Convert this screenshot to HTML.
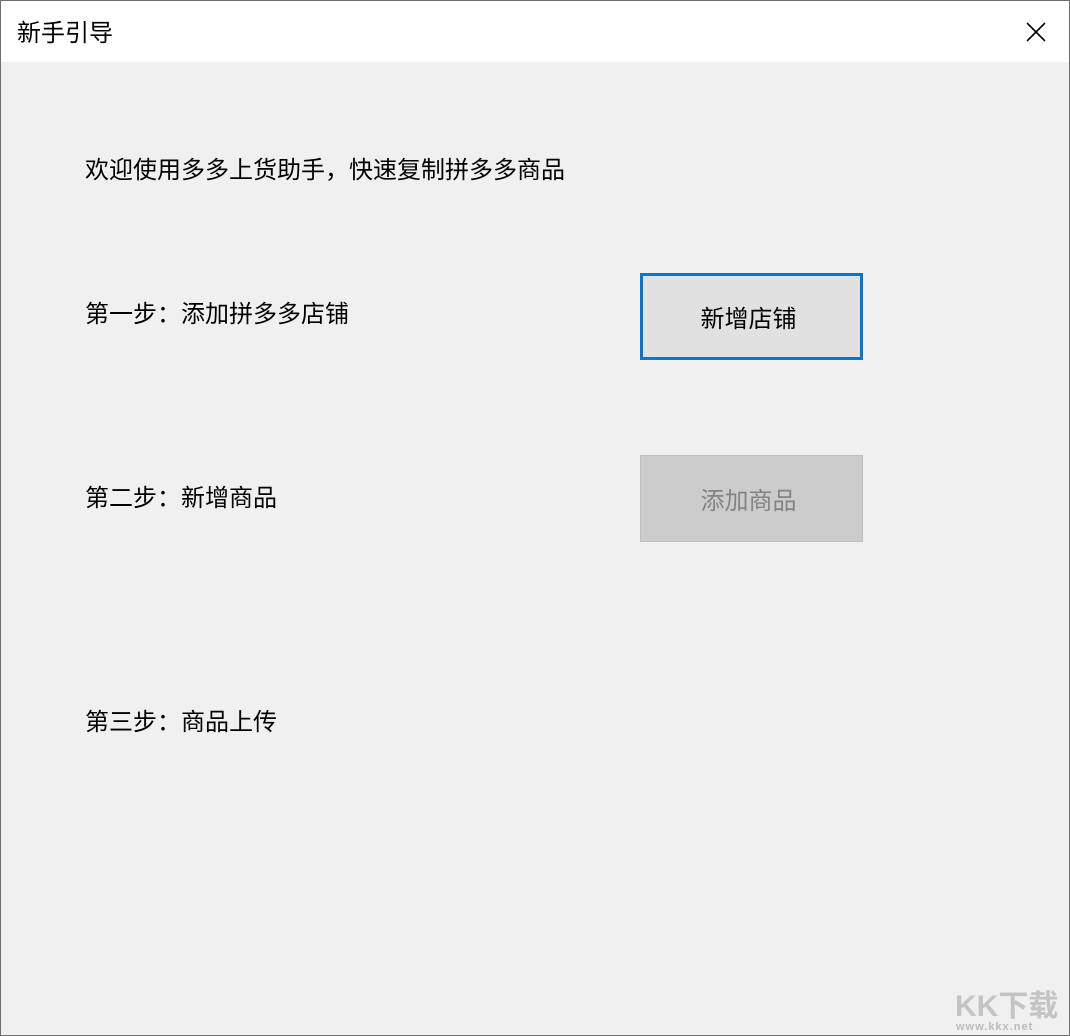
<!DOCTYPE html>
<html><head><meta charset="utf-8"><style>
html,body{margin:0;padding:0;}
body{width:1070px;height:1036px;position:relative;overflow:hidden;background:#f0f0f0;font-family:"Liberation Sans","Noto Sans CJK SC",sans-serif;color:#000;}
.win{position:absolute;left:0;top:0;width:1068px;height:1034px;border:1px solid #6f6f6f;background:#f0f0f0;}
.title{position:absolute;left:0;top:0;width:1068px;height:61px;background:#fff;}
.title span{position:absolute;left:16px;top:16px;font-size:24px;line-height:34px;}
.t{position:absolute;font-size:24px;line-height:34px;white-space:nowrap;}
.btn{position:absolute;left:639px;width:223px;height:87px;box-sizing:border-box;font-size:24px;display:flex;align-items:center;justify-content:center;padding-right:6px;}
.b1{top:272px;border:3px solid #0078d7;background:#e1e1e1;}
.b2{top:454px;border:1px solid #bfbfbf;background:#cccccc;color:#838383;}
.wm{position:absolute;left:954px;top:980px;font-size:30px;color:#c4c4c4;font-weight:bold;}
.wm2{position:absolute;left:955px;top:1020px;font-size:11px;color:#bbb;font-weight:bold;letter-spacing:1px;}
</style></head><body>
<div class="win">
<div class="title"><span>新手引导</span>
<svg style="position:absolute;left:1024px;top:20px" width="22" height="22" viewBox="0 0 22 22"><path d="M2 2L20 20M20 2L2 20" stroke="#000" stroke-width="1.6"/></svg>
</div>
<div class="t" style="left:84px;top:153px">欢迎使用多多上货助手，快速复制拼多多商品</div>
<div class="t" style="left:84px;top:297px">第一步：添加拼多多店铺</div>
<div class="btn b1">新增店铺</div>
<div class="t" style="left:84px;top:481px">第二步：新增商品</div>
<div class="btn b2">添加商品</div>
<div class="t" style="left:84px;top:705px">第三步：商品上传</div>
<div class="wm">KK下载</div>
<div class="wm2">www.kkx.net</div>
</div>
</body></html>
